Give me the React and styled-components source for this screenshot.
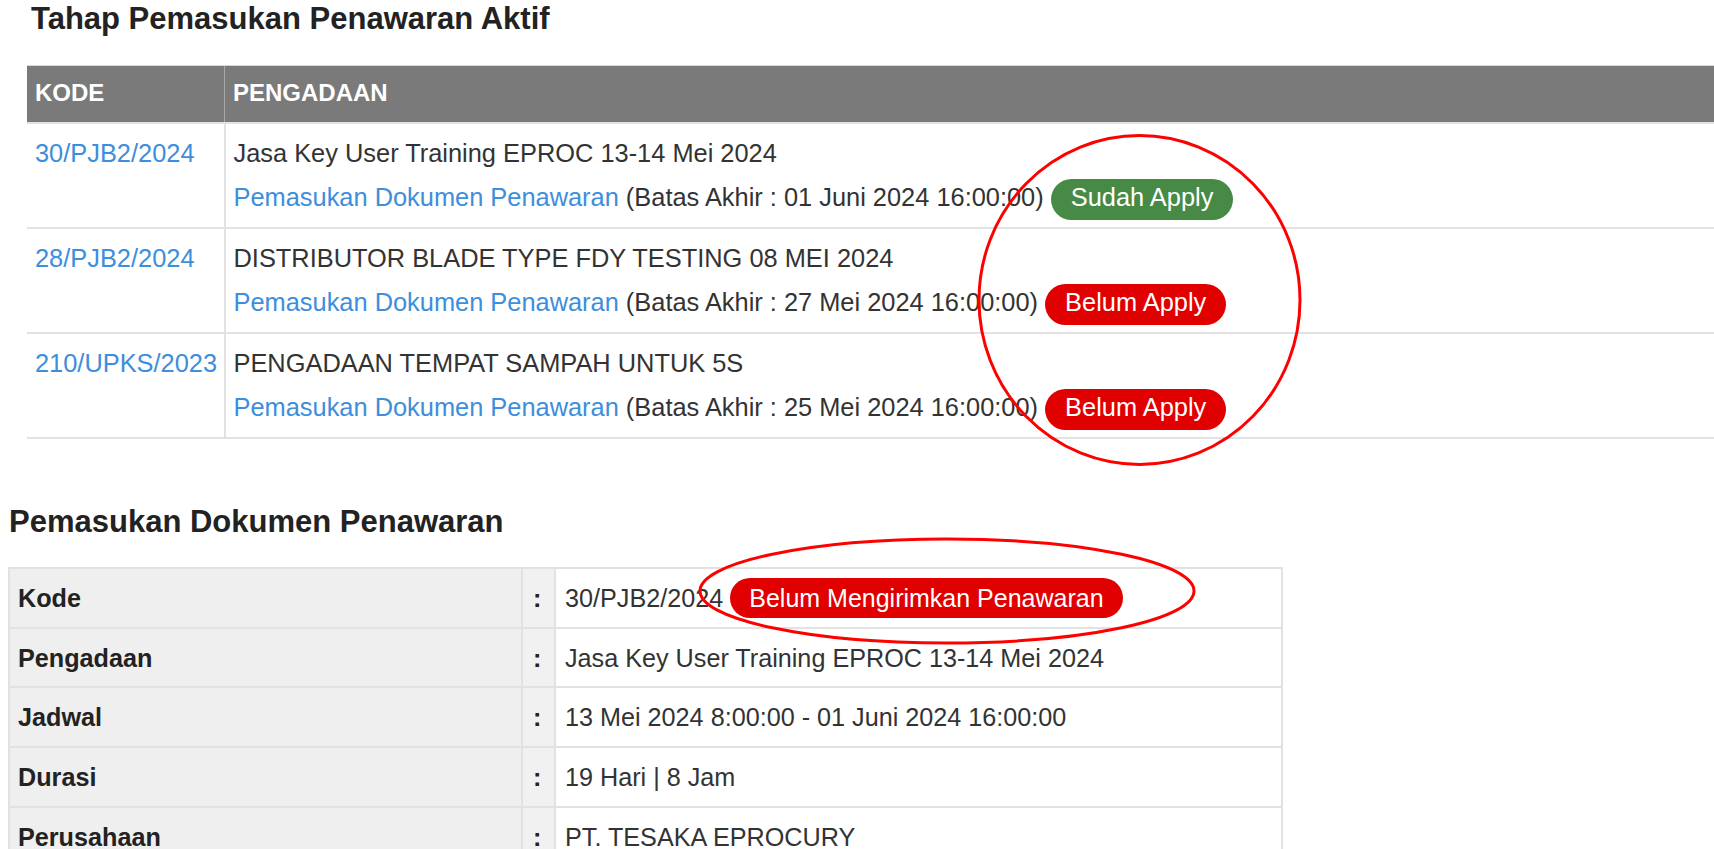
import styled, { createGlobalStyle } from "styled-components"

const GlobalStyle = createGlobalStyle`
  html, body {
    margin: 0;
    padding: 0;
    background: #ffffff;
    overflow: hidden;
  }
  body {
    font-family: "Liberation Sans", Arial, sans-serif;
    color: #333333;
  }
`

const Page = styled.div`
  position: relative;
  width: 1714px;
  height: 849px;
  overflow: hidden;
`

const Section = styled.section`
  padding-left: ${(p) => p.$indent}px;
  margin-top: ${(p) => p.$top}px;
`

const Title = styled.h2`
  margin: 0 0 ${(p) => p.$gap}px ${(p) => p.$shift || 0}px;
  font-size: 31px;
  line-height: 34px;
  font-weight: 700;
  color: #222222;
`

const ActiveTable = styled.table`
  width: calc(100% + 2px);
  border-collapse: collapse;
  table-layout: fixed;
  font-size: 25.4px;
`

const HeadCell = styled.th`
  width: ${(p) => (p.$w ? `${p.$w}px` : "auto")};
  padding: 9px 8px 11px;
  line-height: 36px;
  font-size: 24px;
  font-weight: 700;
  text-align: left;
  color: #ffffff;
  background: #7a7a7a;
  border-top: 1px solid #d6d6d6;
  border-bottom: 1px solid #686868;
  & + & {
    border-left: 1px solid #a8a8a8;
  }
`

const BodyCell = styled.td`
  padding: 11px 8px 7px;
  vertical-align: top;
  line-height: 36px;
  white-space: nowrap;
  border-top: 2px solid #e2e2e2;
  & + & {
    border-left: 2px solid #e2e2e2;
  }
  tr:last-child > & {
    border-bottom: 2px solid #e2e2e2;
  }
`

const Link = styled.span`
  color: #3d8edc;
`

const Name = styled.div`
  line-height: 36px;
  color: #333333;
`

const Deadline = styled.div`
  margin-top: 8px;
  line-height: 36px;
  color: #333333;
`

const Badge = styled.span`
  display: inline-block;
  line-height: 36px;
  padding: ${(p) => (p.$wide ? "2px 19px" : "0 20px 5px")};
  margin: ${(p) => (p.$wide ? "-2px 0" : "0")};
  border-radius: 22px;
  color: #ffffff;
  font-size: ${(p) => (p.$wide ? "25px" : "25.4px")};
  background: ${(p) => (p.$tone === "green" ? "#478a46" : "#e10000")};
`

const DetailTable = styled.table`
  width: 1275px;
  border-collapse: collapse;
  table-layout: fixed;
  font-size: 25.2px;
  border-top: 2px solid #e2e2e2;
  border-left: 2px solid #e2e2e2;
`

const LabelCell = styled.td`
  width: 495px;
  padding: 11px 8px 10.7px;
  line-height: 36px;
  font-weight: 700;
  color: #222222;
  background: #efefef;
  border-top: 2px solid #e2e2e2;
  border-right: 2px solid #e2e2e2;
`

const ColonCell = styled.td`
  width: 11px;
  padding: 11px 10px 10.7px;
  line-height: 36px;
  font-weight: 700;
  color: #222222;
  background: #f1f1f1;
  border-top: 2px solid #e2e2e2;
  border-right: 2px solid #e2e2e2;
`

const ValueCell = styled.td`
  padding: 11px 9px 10.7px;
  line-height: 36px;
  white-space: nowrap;
  color: #333333;
  border-top: 2px solid #e2e2e2;
  border-right: 2px solid #e2e2e2;
`

const Marks = styled.svg`
  position: absolute;
  top: 0;
  left: 0;
  pointer-events: none;
`

const tenders = [
  {
    kode: "30/PJB2/2024",
    name: "Jasa Key User Training EPROC 13-14 Mei 2024",
    deadline: "01 Juni 2024 16:00:00",
    applied: true,
  },
  {
    kode: "28/PJB2/2024",
    name: "DISTRIBUTOR BLADE TYPE FDY TESTING 08 MEI 2024",
    deadline: "27 Mei 2024 16:00:00",
    applied: false,
  },
  {
    kode: "210/UPKS/2023",
    name: "PENGADAAN TEMPAT SAMPAH UNTUK 5S",
    deadline: "25 Mei 2024 16:00:00",
    applied: false,
  },
]

const details = [
  { label: "Kode", value: "30/PJB2/2024", badge: "Belum Mengirimkan Penawaran" },
  { label: "Pengadaan", value: "Jasa Key User Training EPROC 13-14 Mei 2024" },
  { label: "Jadwal", value: "13 Mei 2024 8:00:00 - 01 Juni 2024 16:00:00" },
  { label: "Durasi", value: "19 Hari | 8 Jam" },
  { label: "Perusahaan", value: "PT. TESAKA EPROCURY" },
]

export default function App() {
  return (
    <Page>
      <GlobalStyle />
      <Section $indent={27} $top={2}>
        <Title $gap={29} $shift={4}>Tahap Pemasukan Penawaran Aktif</Title>
        <ActiveTable>
          <thead>
            <tr>
              <HeadCell $w={181}>KODE</HeadCell>
              <HeadCell>PENGADAAN</HeadCell>
            </tr>
          </thead>
          <tbody>
            {tenders.map((t) => (
              <tr key={t.kode}>
                <BodyCell>
                  <Link>{t.kode}</Link>
                </BodyCell>
                <BodyCell>
                  <Name>{t.name}</Name>
                  <Deadline>
                    <Link>Pemasukan Dokumen Penawaran</Link> (Batas Akhir : {t.deadline}){" "}
                    <Badge $tone={t.applied ? "green" : "red"}>
                      {t.applied ? "Sudah Apply" : "Belum Apply"}
                    </Badge>
                  </Deadline>
                </BodyCell>
              </tr>
            ))}
          </tbody>
        </ActiveTable>
      </Section>

      <Section $indent={8} $top={66}>
        <Title $gap={28} $shift={1}>Pemasukan Dokumen Penawaran</Title>
        <DetailTable>
          <tbody>
            {details.map((d) => (
              <tr key={d.label}>
                <LabelCell>{d.label}</LabelCell>
                <ColonCell>:</ColonCell>
                <ValueCell>
                  {d.value}
                  {d.badge && (
                    <>
                      {" "}
                      <Badge $tone="red" $wide>
                        {d.badge}
                      </Badge>
                    </>
                  )}
                </ValueCell>
              </tr>
            ))}
          </tbody>
        </DetailTable>
      </Section>

      <Marks width="1714" height="849" viewBox="0 0 1714 849">
        <ellipse cx="1139.5" cy="300" rx="160.5" ry="164.5" fill="none" stroke="#ff0000" strokeWidth="3" />
        <ellipse cx="947" cy="591" rx="247" ry="52" fill="none" stroke="#ff0000" strokeWidth="3" />
      </Marks>
    </Page>
  )
}
